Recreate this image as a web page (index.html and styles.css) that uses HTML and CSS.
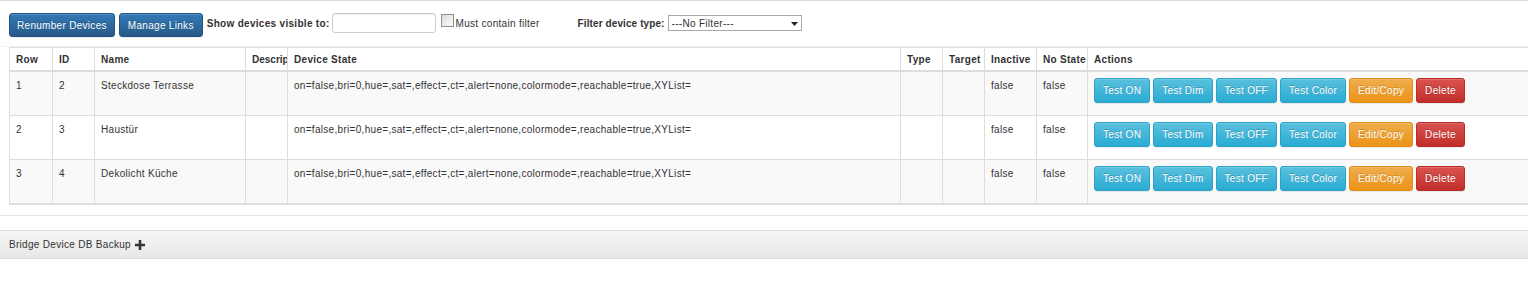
FILE: index.html
```html
<!DOCTYPE html>
<html lang="en">
<head>
  <meta charset="UTF-8" />
  <meta name="viewport" content="width=device-width, initial-scale=1.0"/>
  <title>Bridge Devices</title>
  <link rel="stylesheet" href="styles.css">
</head>
<body>

  <div class="toolbar">
    <button class="btn btn-primary">Renumber Devices</button>
    <button class="btn btn-primary">Manage Links</button>
    <label class="bold-label" for="visibleTo">Show devices visible to:</label>
    <input type="text" id="visibleTo" class="text-input" />
    <input type="checkbox" id="mustContain" class="check" />
    <label class="check-label" for="mustContain">Must contain filter</label>
    <label class="bold-label filter-label" for="deviceType">Filter device type:</label>
    <span class="select-wrap">
      <select id="deviceType" class="select">
        <option>---No Filter---</option>
      </select>
      <svg class="select-arrow" width="7" height="4" viewBox="0 0 7 4"><path d="M0 0h7L3.5 4z" fill="#222"/></svg>
    </span>
  </div>

  <div class="table-wrap">
    <table class="device-table">
      <colgroup>
        <col style="width:43px">
        <col style="width:42px">
        <col style="width:151px">
        <col style="width:42px">
        <col style="width:613px">
        <col style="width:42px">
        <col style="width:42px">
        <col style="width:52px">
        <col style="width:51px">
        <col style="width:452px">
      </colgroup>
      <thead>
        <tr>
          <th>Row</th>
          <th>ID</th>
          <th>Name</th>
          <th class="clip">Descrip</th>
          <th>Device State</th>
          <th>Type</th>
          <th>Target</th>
          <th>Inactive</th>
          <th>No State</th>
          <th>Actions</th>
        </tr>
      </thead>
      <tbody id="deviceRows"></tbody>
    </table>
  </div>

  <div class="divider"></div>

  <div class="panel">
    <div class="panel-heading">
      Bridge Device DB Backup
      <svg class="plus" width="10" height="10" viewBox="0 0 10 10"><path d="M3.7 0h2.6v3.7H10v2.6H6.3V10H3.7V6.3H0V3.7h3.7z" fill="#333"/></svg>
    </div>
  </div>

  <script>
    // Geräte aus der Bridge-Datenbank
    const devices = [
      { id: 2, name: 'Steckdose Terrasse' },
      { id: 3, name: 'Haustür' },
      { id: 4, name: 'Dekolicht Küche' }
    ];
    const state = 'on=false,bri=0,hue=,sat=,effect=,ct=,alert=none,colormode=,reachable=true,XYList=';

    document.getElementById('deviceRows').innerHTML = devices.map((device, i) => `
      <tr>
        <td>${i + 1}</td>
        <td>${device.id}</td>
        <td>${device.name}</td>
        <td></td>
        <td>${state}</td>
        <td></td>
        <td></td>
        <td>false</td>
        <td>false</td>
        <td>
          <div class="actions">
            <button class="btn btn-info">Test ON</button>
            <button class="btn btn-info">Test Dim</button>
            <button class="btn btn-info">Test OFF</button>
            <button class="btn btn-info">Test Color</button>
            <button class="btn btn-warning">Edit/Copy</button>
            <button class="btn btn-danger">Delete</button>
          </div>
        </td>
      </tr>
    `).join('');
  </script>
</body>
</html>
```

FILE: styles.css
```css
html, body {
  overflow: hidden;
}
body {
  font-family: "Liberation Sans", Arial, sans-serif;
  font-size: 10px;
  line-height: 14px;
  letter-spacing: 0.3px;
  color: #333;
  background-color: #fff;
  margin: 0;
  padding: 0;
  border-top: 1px solid #ddd;
}
.toolbar {
  display: flex;
  align-items: flex-start;
  padding: 12px 9px 9px;
  height: 24px;
  border-bottom: 1px solid #f3f3f3;
}
.btn {
  font-family: inherit;
  font-size: 10px;
  letter-spacing: 0.3px;
  height: 25px;
  padding: 0 8px;
  color: white;
  border: 1px solid transparent;
  border-radius: 3px;
  text-shadow: 0 -1px 0 rgba(0, 0, 0, 0.2);
  box-shadow: inset 0 1px 0 rgba(255, 255, 255, 0.15), 0 1px 1px rgba(0, 0, 0, 0.075);
  cursor: pointer;
}
.toolbar .btn {
  height: 24px;
  padding: 0 7px;
  margin-right: 4px;
}
.toolbar .btn + .btn {
  padding: 0 8px;
}
.btn-primary {
  background-image: linear-gradient(to bottom, #337ab7 0, #265a88 100%);
  border-color: #245580;
}
.btn-info {
  background-image: linear-gradient(to bottom, #5bc0de 0, #2aabd2 100%);
  border-color: #28a4c9;
}
.btn-warning {
  background-image: linear-gradient(to bottom, #f0ad4e 0, #eb9316 100%);
  border-color: #e38d13;
}
.btn-danger {
  background-image: linear-gradient(to bottom, #d9534f 0, #c12e2a 100%);
  border-color: #b92c28;
}
.bold-label {
  font-weight: bold;
  margin-top: 4px;
}
.text-input {
  width: 104px;
  height: 20px;
  box-sizing: border-box;
  margin: 0 0 0 2px;
  border: 1px solid #ccc;
  border-radius: 3px;
  box-shadow: inset 0 1px 1px rgba(0, 0, 0, 0.075);
}
.check {
  appearance: none;
  width: 13px;
  height: 13px;
  margin: 1px 1px 0 5px;
  border: 1px solid #8f8f8f;
  background-image: linear-gradient(to bottom right, #dcdcdc, #fbfbfb);
  box-sizing: border-box;
}
.check-label {
  margin-top: 4px;
  margin-left: 1px;
}
.filter-label {
  margin-left: 38px;
  letter-spacing: 0.1px;
}
.select-wrap {
  position: relative;
  margin: 2px 0 0 3px;
}
.select {
  appearance: none;
  width: 134px;
  height: 16px;
  padding: 0 3px;
  font-family: inherit;
  font-size: 10px;
  letter-spacing: 0.3px;
  color: #333;
  background-color: white;
  border: 1px solid #a9a9a9;
  border-radius: 0;
  display: block;
}
.select-arrow {
  position: absolute;
  right: 4px;
  top: 7px;
}
.table-wrap {
  padding-left: 9px;
}
.device-table {
  width: 1530px;
  table-layout: fixed;
  border-collapse: collapse;
  border: 1px solid #ddd;
  border-bottom-width: 2px;
}
.device-table th,
.device-table td {
  text-align: left;
  vertical-align: top;
  border: 1px solid #ddd;
  white-space: nowrap;
  overflow: hidden;
}
.device-table th {
  padding: 5px 6px 3px;
  font-weight: bold;
  border-bottom: 2px solid #ddd;
}
.device-table th.clip {
  padding-right: 0;
  letter-spacing: 0;
}
.device-table td {
  padding: 7px 6px 0;
  height: 36px;
}
.device-table tbody tr:nth-child(odd) {
  background-color: #f9f9f9;
}
.actions {
  display: flex;
  gap: 3px;
  margin-top: -1px;
}
.divider {
  margin-top: 10px;
  border-top: 1px solid #e5e5e5;
}
.panel {
  margin-top: 14px;
}
.panel-heading {
  display: flex;
  align-items: center;
  gap: 4px;
  height: 27px;
  padding: 0 9px;
  border-top: 1px solid #ddd;
  border-bottom: 1px solid #ddd;
  background-image: linear-gradient(to bottom, #f5f5f5 0, #e8e8e8 100%);
}
```
